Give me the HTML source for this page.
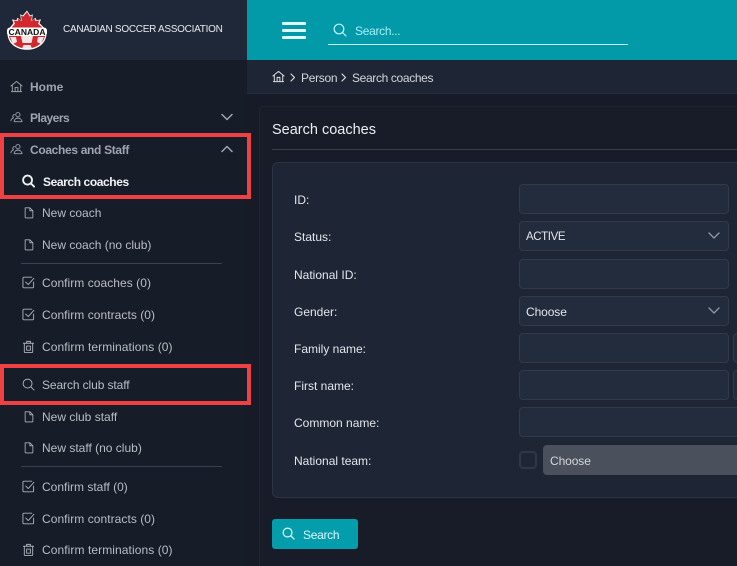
<!DOCTYPE html>
<html><head><meta charset="utf-8">
<style>
*{box-sizing:border-box;margin:0;padding:0}
html,body{width:737px;height:566px;overflow:hidden;background:#161b27;font-family:"Liberation Sans",sans-serif}
#w{position:relative;width:737px;height:566px;overflow:hidden}
.a{position:absolute}
.t{position:absolute;white-space:nowrap;font-size:12px;line-height:16px;color:#b9bdc4}
.b{font-weight:bold;letter-spacing:-.33px}
svg{position:absolute;fill:none;stroke-linecap:round;stroke-linejoin:round}
.i{position:absolute;background:#232c3c;border:1px solid #303a4a;border-radius:4px}
.l{position:absolute;left:294px;font-size:12px;line-height:16px;color:#e4e6ea;white-space:nowrap}
.red{position:absolute;border:4px solid #ef4044}
.sep{position:absolute;left:21px;width:201px;height:1px;background:#3a4150}
</style></head><body>
<div id="w">
<svg width="0" height="0" style="position:absolute"><defs>
<symbol id="home" viewBox="0 0 14 14"><path d="M1 6.500 7 1.500l6 5M2.500 5.600V12.500h9V5.600M1.500 12.500h11M5.500 12.500V8h3v4.500"/></symbol>
<symbol id="ppl" viewBox="0 0 14 14"><circle cx="8.500" cy="4" r="2.300"/><path d="M4.500 11.500c0-2.500 2-3.800 4-3.800s4 1.300 4.500 3.800zM4.800 3.800a2 2 0 0 0-1 3.600M1 10.500c.2-1.500 1-2.400 2.200-2.800"/></symbol>
<symbol id="doc" viewBox="0 0 14 14"><path d="M2.500 1.500h5.500l3.500 3.500v7.500a.8.8 0 0 1-.8.800H3.300a.8.8 0 0 1-.8-.8zM8 1.500V5h3.500"/></symbol>
<symbol id="chk" viewBox="0 0 14 14"><path d="M12.500 6.500v5.200a1 1 0 0 1-1 1H2a1 1 0 0 1-1-1V2.300a1 1 0 0 1 1-1h8.500M4 6.500l2.700 2.700L12.800 2.500"/></symbol>
<symbol id="trash" viewBox="0 0 14 14"><path d="M1.500 3.500h11M5 3.500V1.500h4v2M2.500 3.500v9a1 1 0 0 0 1 1h7a1 1 0 0 0 1-1v-9M5 6.500h4v4.500H5z"/></symbol>
<symbol id="srch" viewBox="0 0 14 14"><circle cx="6" cy="6" r="4.800"/><path d="M9.500 9.500 13 13"/></symbol>
</defs></svg>

<!-- sidebar -->
<div class="a" style="left:0;top:0;width:247px;height:566px;background:#171c29"></div>
<div class="a" style="left:0;top:0;width:247px;height:60px;background:#1f2839"></div>

<!-- logo -->
<svg style="left:7px;top:10px" width="40" height="40" viewBox="0 0 40 40">
<path d="M20 0.500l3.200 5 2.600-1.200-.8 6 3.500-2.600 1 2.500 4.500-.8-1.500 3.800C36.800 17 39.500 20 39.500 23.500 39.500 33 31 39.800 20 39.800S.5 33 .5 23.500C.5 20 3.200 17 6.500 13.200L5 9.400l4.500.8 1-2.500 3.500 2.600-.8-6 2.600 1.200z" fill="#fff"/>
<path d="M20 2l2.800 4.500 2.200-1-.7 5.600 3.300-2.400.9 2.400 3.900-.7-1.300 3.300C34.800 17 38.300 19.600 38.300 23.500 38.300 32 30 38.500 20 38.500S1.700 32 1.700 23.500C1.700 19.600 5.200 17 7.900 13.700l-1.300-3.300 3.900.7.900-2.400 3.300 2.400L14 5.500l2.200 1z" fill="#d0282e"/>
<path d="M14 26h12l-1.500 7h-9zM3 27h6l1 5-4 2zM31 27h6l-3 7-4-2zM16.500 35h7l1.500 3.500h-10z" fill="#f4e6e6"/>
<rect x="0" y="17.500" width="40" height="8.500" rx="3" fill="#fff"/>
<text x="20" y="24.800" font-family="Liberation Sans" font-size="8.500" font-weight="bold" fill="#111" text-anchor="middle" stroke="none" textLength="37" lengthAdjust="spacingAndGlyphs">CANADA</text>
</svg>
<div class="t" style="left:63px;top:22px;font-size:10px;letter-spacing:-.28px;color:#e8eaee">CANADIAN SOCCER ASSOCIATION</div>

<svg style="left:10px;top:80px;stroke:#9da1a9" width="13" height="13"><use href="#home"/></svg>
<div class="t b" style="left:30px;top:79px;color:#a0a4ac;letter-spacing:0">Home</div>
<svg style="left:10px;top:111px;stroke:#9da1a9" width="13" height="13"><use href="#ppl"/></svg>
<div class="t b" style="left:30px;top:110px;color:#a0a4ac;letter-spacing:-.5px">Players</div>
<svg style="left:221px;top:113px;stroke:#a0a4ac;stroke-width:1.500" width="12" height="8"><path d="M1 1.500 6 6.500 11 1.500"/></svg>

<svg style="left:10px;top:143px;stroke:#9da1a9" width="13" height="13"><use href="#ppl"/></svg>
<div class="t b" style="left:30px;top:142px;color:#a0a4ac">Coaches and Staff</div>
<svg style="left:221px;top:145px;stroke:#a0a4ac;stroke-width:1.500" width="12" height="8"><path d="M1 6.500 6 1.500 11 6.500"/></svg>
<svg style="left:22px;top:174px;stroke:#eef0f3;stroke-width:2" width="13" height="14"><use href="#srch"/></svg>
<div class="t b" style="left:43px;top:174px;color:#f2f3f5;letter-spacing:-.4px">Search coaches</div>

<svg style="left:23px;top:206px;stroke:#aeb2b9" width="12" height="13"><use href="#doc"/></svg>
<div class="t" style="left:42px;top:205px">New coach</div>
<svg style="left:23px;top:238px;stroke:#aeb2b9" width="12" height="13"><use href="#doc"/></svg>
<div class="t" style="left:42px;top:237px">New coach (no club)</div>
<div class="sep" style="top:263px"></div>
<svg style="left:22px;top:276px;stroke:#aeb2b9" width="13" height="13"><use href="#chk"/></svg>
<div class="t" style="left:42px;top:275px;letter-spacing:.05px">Confirm coaches (0)</div>
<svg style="left:22px;top:308px;stroke:#aeb2b9" width="13" height="13"><use href="#chk"/></svg>
<div class="t" style="left:42px;top:307px;letter-spacing:.05px">Confirm contracts (0)</div>
<svg style="left:22px;top:340px;stroke:#aeb2b9" width="13" height="13"><use href="#trash"/></svg>
<div class="t" style="left:42px;top:339px;letter-spacing:.08px">Confirm terminations (0)</div>
<svg style="left:22px;top:378px;stroke:#aeb2b9" width="13" height="13"><use href="#srch"/></svg>
<div class="t" style="left:42px;top:377px;letter-spacing:-.1px">Search club staff</div>
<svg style="left:23px;top:410px;stroke:#aeb2b9" width="12" height="13"><use href="#doc"/></svg>
<div class="t" style="left:42px;top:409px">New club staff</div>
<svg style="left:23px;top:441px;stroke:#aeb2b9" width="12" height="13"><use href="#doc"/></svg>
<div class="t" style="left:42px;top:440px">New staff (no club)</div>
<div class="sep" style="top:466px"></div>
<svg style="left:22px;top:480px;stroke:#aeb2b9" width="13" height="13"><use href="#chk"/></svg>
<div class="t" style="left:42px;top:479px">Confirm staff (0)</div>
<svg style="left:22px;top:512px;stroke:#aeb2b9" width="13" height="13"><use href="#chk"/></svg>
<div class="t" style="left:42px;top:511px;letter-spacing:.05px">Confirm contracts (0)</div>
<svg style="left:22px;top:543px;stroke:#aeb2b9" width="13" height="13"><use href="#trash"/></svg>
<div class="t" style="left:42px;top:542px;letter-spacing:.08px">Confirm terminations (0)</div>

<!-- top bar -->
<div class="a" style="left:247px;top:0;width:490px;height:60px;background:#0299a9"></div>
<div class="a" style="left:282px;top:22px;width:24px;height:3px;background:#e0fbfd;border-radius:1px"></div>
<div class="a" style="left:282px;top:29px;width:24px;height:3px;background:#e0fbfd;border-radius:1px"></div>
<div class="a" style="left:282px;top:36px;width:24px;height:3px;background:#e0fbfd;border-radius:1px"></div>
<svg style="left:333px;top:23px;stroke:#c8f6fa;stroke-width:1.200" width="14" height="14"><use href="#srch"/></svg>
<div class="t" style="left:355px;top:23px;color:#a5eef4;letter-spacing:-.3px">Search...</div>
<div class="a" style="left:328px;top:44px;width:300px;height:1px;background:#c8f6fa"></div>

<!-- breadcrumb -->
<div class="a" style="left:247px;top:60px;width:490px;height:34px;background:#1e2636;border-bottom:1px solid #252d3d"></div>
<svg style="left:272px;top:70px;stroke:#d8dade;stroke-width:1.100" width="13" height="13"><use href="#home"/></svg>
<svg style="left:290px;top:73px;stroke:#d8dade;stroke-width:1.200" width="6" height="9"><path d="M1 1 4.500 4.500 1 8"/></svg>
<div class="t" style="left:301px;top:70px;color:#d3d6da;letter-spacing:-.3px">Person</div>
<svg style="left:341px;top:73px;stroke:#d8dade;stroke-width:1.200" width="6" height="9"><path d="M1 1 4.500 4.500 1 8"/></svg>
<div class="t" style="left:352px;top:70px;color:#d3d6da;letter-spacing:-.35px">Search coaches</div>

<!-- card -->
<div class="a" style="left:259px;top:106px;width:490px;height:470px;background:#171c28;border:1px solid #1e2431;border-radius:4px"></div>
<div class="t" style="left:272px;top:121px;font-size:14.500px;line-height:18px;color:#eceef0">Search coaches</div>
<div class="a" style="left:272px;top:149px;width:465px;height:1px;background:#3a404c"></div>

<!-- form panel -->
<div class="a" style="left:272px;top:162px;width:480px;height:336px;background:#1e2635;border:1px solid #2b3443;border-radius:6px"></div>

<div class="l" style="top:192px">ID:</div>
<div class="l" style="top:229px">Status:</div>
<div class="l" style="top:267px">National ID:</div>
<div class="l" style="top:304px">Gender:</div>
<div class="l" style="top:341px">Family name:</div>
<div class="l" style="top:378px">First name:</div>
<div class="l" style="top:415px">Common name:</div>
<div class="l" style="top:453px">National team:</div>

<div class="i" style="left:519px;top:184px;width:210px;height:30px"></div>
<div class="i" style="left:519px;top:221px;width:210px;height:30px"></div>
<div class="t" style="left:526px;top:229px;font-size:11.500px;letter-spacing:-.4px;color:#e4e6ea">ACTIVE</div>
<svg style="left:708px;top:232px;stroke:#8f95a0;stroke-width:1.400" width="12" height="8"><path d="M1 1 6 6 11 1"/></svg>
<div class="i" style="left:519px;top:259px;width:210px;height:30px"></div>
<div class="i" style="left:519px;top:296px;width:210px;height:30px"></div>
<div class="t" style="left:526px;top:304px;color:#e4e6ea;letter-spacing:-.1px">Choose</div>
<svg style="left:708px;top:307px;stroke:#8f95a0;stroke-width:1.400" width="12" height="8"><path d="M1 1 6 6 11 1"/></svg>
<div class="i" style="left:519px;top:333px;width:210px;height:30px"></div>
<div class="i" style="left:733px;top:333px;width:30px;height:30px"></div>
<div class="i" style="left:519px;top:370px;width:210px;height:30px"></div>
<div class="i" style="left:733px;top:370px;width:30px;height:30px"></div>
<div class="i" style="left:519px;top:407px;width:240px;height:30px"></div>
<div class="a" style="left:519px;top:451px;width:18px;height:18px;border:2px solid #2f3848;border-radius:4px;background:#1f2737"></div>
<div class="a" style="left:543px;top:445px;width:220px;height:30px;background:#4a505c;border-radius:4px"></div>
<div class="t" style="left:550px;top:453px;color:#d5d7db;letter-spacing:-.1px">Choose</div>

<!-- button -->
<div class="a" style="left:272px;top:519px;width:86px;height:30px;background:#049dab;border-radius:3px"></div>
<svg style="left:282px;top:527px;stroke:#e0fbfd;stroke-width:1.300" width="13" height="13"><use href="#srch"/></svg>
<div class="t" style="left:303px;top:527px;color:#d9f7fa;letter-spacing:-.3px">Search</div>

<!-- red boxes -->
<div class="red" style="left:0;top:133px;width:251px;height:66px"></div>
<div class="red" style="left:0;top:364px;width:251px;height:41px"></div>
</div>
</body></html>
